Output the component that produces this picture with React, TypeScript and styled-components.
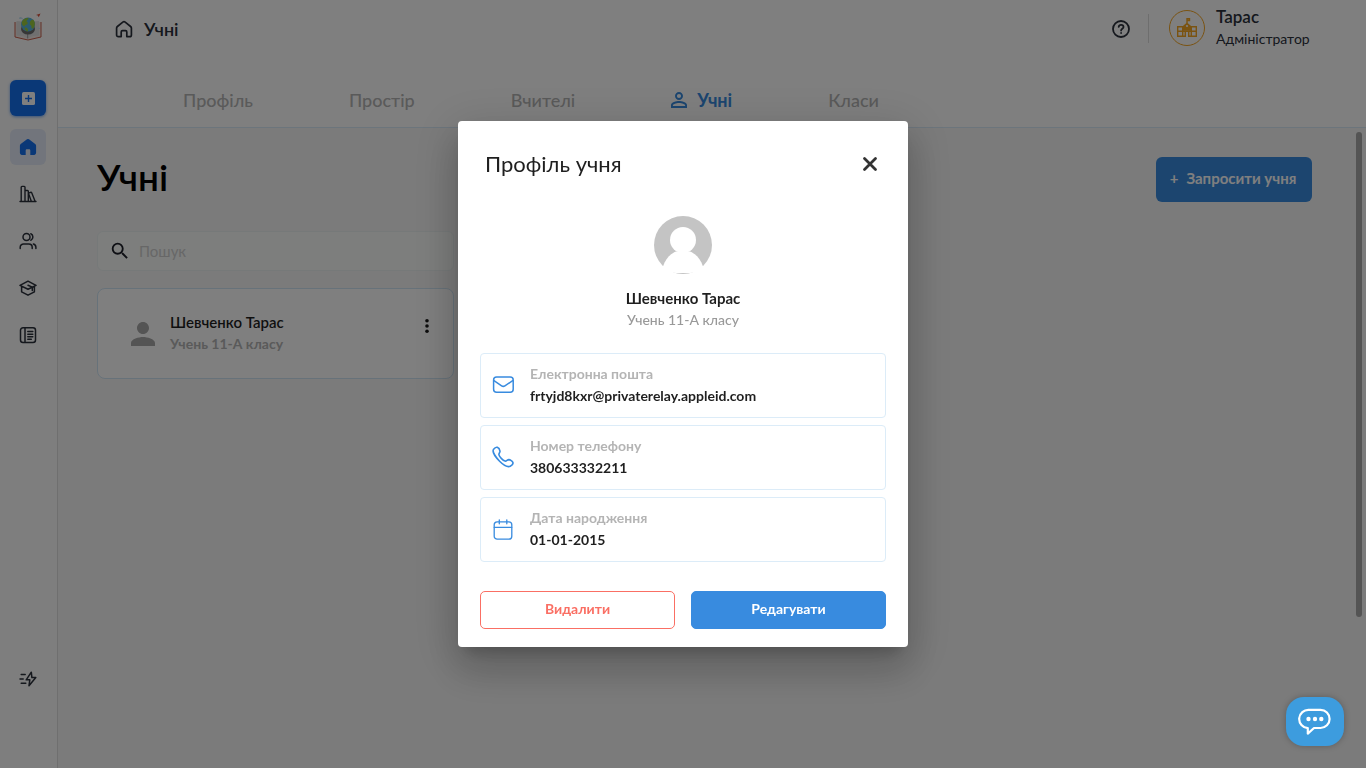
import React from "react";
import styled, { createGlobalStyle, css } from "styled-components";

const GlobalStyle = createGlobalStyle`
  * { box-sizing: border-box; }
  html, body, #root { height: 100%; margin: 0; }
  body {
    font-family: Lato, "Noto Sans", sans-serif;
    font-size: 15px;
    line-height: 22px;
    color: #1f1f1f;
    overflow: hidden;
  }
  button, input { font: inherit; color: inherit; }
  button { cursor: pointer; padding: 0; border: 0; background: none; }
  a { color: inherit; text-decoration: none; }
  h1, h2, p, dl, dt, dd { margin: 0; }
  svg { display: block; flex: none; }
`;

const Shell = styled.div`
  display: flex;
  min-height: 100%;
  background: #f7f7f7;
`;

const Sidebar = styled.nav`
  display: flex;
  flex-direction: column;
  align-items: center;
  gap: 11px;
  width: 58px;
  flex: none;
  padding: 12px 1px 71px 0;
  background: #fcfcfc;
  border-right: 1px solid #dedede;
`;

const LogoLink = styled.a`
  margin-bottom: 28px;
`;

const railItem = css`
  display: flex;
  align-items: center;
  justify-content: center;
  width: 36px;
  height: 36px;
  border-radius: 6px;
`;

const AddButton = styled.button`
  ${railItem}
  margin-bottom: 2px;
  background: #1570ef;
  color: #fff;
  box-shadow: 0 1px 3px rgba(21, 112, 239, 0.6);
`;

const RailLink = styled.a<{ $active?: boolean; $last?: boolean }>`
  ${railItem}
  color: ${(p) => (p.$active ? "#1570ef" : "#2b303b")};
  background: ${(p) => (p.$active ? "#e4ebf8" : "none")};
  margin-top: ${(p) => (p.$last ? "auto" : "0")};
`;

const Column = styled.div`
  display: flex;
  flex-direction: column;
  flex: 1;
  min-width: 0;
`;

const Header = styled.header`
  background: #fff;
  border-bottom: 1px solid #d9ebf8;
`;

const TopBar = styled.div`
  display: flex;
  align-items: flex-start;
  justify-content: space-between;
  height: 75px;
  padding: 7px 54px 0 57px;
`;

const Crumb = styled.a`
  display: flex;
  align-items: center;
  gap: 11px;
  height: 43px;
  font-size: 18px;
  font-weight: 600;
  color: #2b303b;
`;

const Account = styled.div`
  display: flex;
  align-items: center;
  height: 42px;
  color: #2b303b;
`;

const HelpButton = styled.button`
  padding-right: 17px;
  margin-right: 20px;
  height: 29px;
  border-right: 1px solid #dcdcdc;
`;

const SchoolBadge = styled.div`
  display: flex;
  align-items: center;
  justify-content: center;
  width: 36px;
  height: 36px;
  margin-right: 11px;
  border: 1px solid #f5a623;
  border-radius: 50%;
  color: #f5a623;
`;

const AccountText = styled.div`
  min-width: 96px;
`;

const AccountName = styled.p`
  font-size: 17px;
  font-weight: 600;
`;

const AccountRole = styled.p`
  font-size: 14px;
`;

const Tabs = styled.nav`
  display: flex;
  align-items: center;
  gap: 96px;
  height: 52px;
  padding: 0 0 3px 125px;
  font-size: 18px;
`;

const Tab = styled.a<{ $active?: boolean }>`
  display: flex;
  align-items: center;
  gap: 10px;
  color: ${(p) => (p.$active ? "#388bdf" : "#b4b4b4")};
  font-weight: ${(p) => (p.$active ? 700 : 500)};
`;

const Main = styled.main`
  padding: 29px 54px 0 39px;
`;

const TitleRow = styled.div`
  display: flex;
  align-items: center;
  justify-content: space-between;
  margin-bottom: 29px;
`;

const PageTitle = styled.h1`
  padding-bottom: 5px;
  font-size: 37px;
  line-height: 40px;
  font-weight: 600;
  color: #000;
`;

const InviteButton = styled.button`
  display: flex;
  align-items: center;
  justify-content: center;
  gap: 8px;
  width: 156px;
  height: 45px;
  padding: 0 2px 3px 0;
  border-radius: 6px;
  background: #388bdf;
  color: #fff;
  font-weight: 700;
`;

const List = styled.section`
  display: flex;
  flex-direction: column;
  gap: 17px;
  width: 357px;
`;

const SearchBox = styled.label`
  display: flex;
  align-items: center;
  gap: 8px;
  height: 40px;
  padding: 0 11px;
  border: 1px solid #edf3f3;
  border-radius: 6px;
  background: #fafdfb;
  color: #1d1f28;
`;

const SearchInput = styled.input`
  flex: 1;
  min-width: 0;
  padding: 0;
  border: 0;
  outline: 0;
  background: none;
  &::placeholder { color: #cfcfcf; opacity: 1; }
`;

const StudentCard = styled.article`
  display: flex;
  align-items: flex-start;
  height: 91px;
  padding: 22px 14px 0 27px;
  border: 1px solid #cfe5f5;
  border-radius: 8px;
  background: #fff;
`;

const CardAvatar = styled.div`
  margin: 5px 9px 0 0;
  color: #a8a8a8;
`;

const CardText = styled.div`
  flex: 1;
  font-weight: 600;
`;

const CardNote = styled.p`
  font-size: 14px;
  font-weight: 700;
  color: #b4b4b4;
`;

const MenuButton = styled.button`
  margin-top: 3px;
  color: #1a1a1a;
`;

const ScrollThumb = styled.div`
  position: fixed;
  top: 132px;
  right: 4px;
  width: 6px;
  height: 485px;
  border-radius: 3px;
  background: #a8a8a8;
`;

const Backdrop = styled.div`
  position: fixed;
  inset: 0;
  display: flex;
  align-items: center;
  justify-content: center;
  background: rgba(0, 0, 0, 0.5);
`;

const Dialog = styled.div`
  width: 450px;
  padding: 27px 22px 18px;
  border-radius: 4px;
  background: #fff;
  box-shadow:
    0 11px 15px -7px rgba(0, 0, 0, 0.2),
    0 24px 38px 3px rgba(0, 0, 0, 0.14),
    0 9px 46px 8px rgba(0, 0, 0, 0.12);
`;

const DialogHead = styled.div`
  display: flex;
  align-items: center;
  justify-content: space-between;
  padding: 0 8px 0 5px;
  margin-bottom: 36px;
`;

const DialogTitle = styled.h2`
  font-size: 22px;
  line-height: 32px;
  font-weight: 400;
`;

const Person = styled.div`
  display: flex;
  flex-direction: column;
  align-items: center;
  margin-bottom: 22px;
`;

const PersonName = styled.p`
  margin-top: 13px;
  font-weight: 700;
`;

const PersonNote = styled.p`
  font-size: 14px;
  font-weight: 500;
  color: #999;
`;

const Fields = styled.dl`
  display: flex;
  flex-direction: column;
  gap: 7px;
  margin-bottom: 29px;
`;

const Field = styled.div`
  display: grid;
  grid-template-columns: 22px 1fr;
  grid-template-rows: 22px 22px;
  column-gap: 16px;
  height: 65px;
  padding: 9px 11px 0;
  border: 1px solid #dcecf8;
  border-radius: 4px;
  & > svg {
    grid-row: 1 / 3;
    align-self: center;
    color: #388bdf;
  }
`;

const FieldLabel = styled.dt`
  font-size: 14px;
  color: #b4b4b4;
  font-weight: 700;
`;

const FieldValue = styled.dd`
  font-size: 14px;
  font-weight: 700;
`;

const Actions = styled.div`
  display: grid;
  grid-template-columns: 1fr 1fr;
  gap: 16px;
`;

const ActionButton = styled.button<{ $danger?: boolean }>`
  height: 38px;
  padding-bottom: 2px;
  border-radius: 5px;
  border: 1px solid ${(p) => (p.$danger ? "#fa6f64" : "#388bdf")};
  background: ${(p) => (p.$danger ? "#fff" : "#388bdf")};
  color: ${(p) => (p.$danger ? "#fa6f64" : "#fff")};
  font-size: 14px;
  font-weight: 700;
`;

const ChatButton = styled.button`
  position: fixed;
  right: 22px;
  bottom: 22px;
  display: flex;
  align-items: center;
  justify-content: center;
  width: 58px;
  height: 49px;
  border-radius: 18px;
  background: #3d9cde;
  color: #fff;
  box-shadow: 0 0 6px rgba(0, 0, 0, 0.25);
`;

type StrokeProps = { size?: number; box?: number; width?: number; children: React.ReactNode };

const Stroke = ({ size = 18, box = 18, width = 1.5, children }: StrokeProps) => (
  <svg width={size} height={size} viewBox={`0 0 ${box} ${box}`} fill="none" stroke="currentColor"
    strokeWidth={width} strokeLinecap="round" strokeLinejoin="round" aria-hidden="true">
    {children}
  </svg>
);

const Logo = () => (
  <svg width="28" height="29" viewBox="0 0 28 29" aria-hidden="true">
    <path d="M1 10v15l13 3 13-3V10" fill="#f4e9e4" stroke="#c9604c" strokeWidth="1" />
    <path d="M2.500 9c4 .2 8 1.200 11.200 4 3.200-2.800 7.300-3.800 11.300-4v14.500c-4 0-8 .6-11.300 3-3.200-2.400-7.200-3-11.200-3z" fill="#e0e0e0" />
    <path d="M13.700 13v13.500" stroke="#9a9a9a" />
    <ellipse cx="14" cy="17" rx="7" ry="5.500" fill="#6f6f6f" />
    <circle cx="14" cy="12.500" r="7" fill="#58b5dc" />
    <path d="M8 9.500c2-3 5-3.800 6.500-3.200-.3 1.600-1.800 1.800-2 3.200 1.500.4 1.500 2 .5 3-1.800.2-2 1.500-3 1.800-1.700-1-2.700-2.800-2-4.800zM16 10c1-2 3-3 4-1.500 1.200 2.500 1.200 5-.5 7.500-1.500 1.500-2.500 0-2-2-1.500-.8-2.200-2.500-1.500-4zM10.500 15.500c2-.5 4 .8 3.500 3.800-2.100 0-3.500-1.500-3.500-3.800z" fill="#9acb3c" />
    <path d="M22 3l4.500-1.500-1.700 3.700-1-1.700z" fill="#d9503a" />
    <path d="M5 6.500c0-1.500 2-2 3-.8 1 .2 1 1 .5 1.300H5.500z" fill="#c5e2f2" />
    <path d="M24 16c1-.6 2-.2 2 1h-2z" fill="#c5e2f2" />
  </svg>
);

const PlusSquare = () => (
  <svg width="13" height="13" viewBox="0 0 12 12" aria-hidden="true">
    <rect width="12" height="12" rx="1.500" fill="currentColor" />
    <path d="M6 2.800v6.400M2.800 6h6.400" stroke="#1570ef" strokeWidth="1.300" />
  </svg>
);

const HomeSolid = () => (
  <svg width="18" height="18" viewBox="0 0 18 18" fill="currentColor" aria-hidden="true">
    <path d="M8 1.300a1.700 1.700 0 0 1 2 0l6.200 4.700c.6.400.9 1 .9 1.700v7.100c0 1.200-.9 2.200-2 2.200h-3.800v-4.500c0-.7-.5-1.200-1.200-1.200H7.900c-.7 0-1.200.5-1.200 1.200V17H2.900c-1.200 0-2-1-2-2.200V7.700c0-.7.300-1.300.8-1.700z" />
  </svg>
);

const HomeOutline = () => (
  <Stroke width={1.7}>
    <path d="M6.200 16.600H3.300c-1 0-1.700-.8-1.700-1.700V8.100c0-.6.300-1.200.8-1.600l5.400-4.400a1.900 1.900 0 0 1 2.400 0l5.400 4.400c.5.400.8 1 .8 1.600v6.800c0 1-.8 1.700-1.700 1.700h-2.900v-4.700c0-.7-.5-1.200-1.200-1.200H7.400c-.7 0-1.200.5-1.200 1.200z" />
  </Stroke>
);

const Books = () => (
  <Stroke width={1.4}>
    <path d="M1 16.500h16M2.200 16.300V2.200c0-.5.300-.8.800-.8h2.200c.5 0 .8.300.8.800v14.100M6.200 5.500h2.300c.5 0 .8.300.8.800v10M9.500 8.200l2.200-.9c.4-.1.800 0 1 .4l3.400 8.600M9.500 8.500l2.800 7.800" />
  </Stroke>
);

const Users = () => (
  <Stroke width={1.5}>
    <circle cx="7.500" cy="5" r="3.500" />
    <path d="M1.200 16.500v-1.200c0-2 1.600-3.400 3.400-3.400h5.200c2 0 3.400 1.500 3.400 3.400v1.200M11.800 1.800a3.500 3.500 0 0 1 0 6.400M14.400 12c1.500.4 2.500 1.700 2.500 3.300v1.200" />
  </Stroke>
);

const Graduation = () => (
  <Stroke width={1.5}>
    <path d="M1 6.400L9 2.200l8 4.200-8 3.800zM2.600 7.300v5.500L9 16.200l6.400-3.400V7.300M9 6.200l4.300 1.900v3.500" />
  </Stroke>
);

const Journal = () => (
  <Stroke width={1.5}>
    <rect x="1.500" y="1.800" width="15" height="14.600" rx="2.500" />
    <path d="M6 2v14.200M8.800 5.500h5M8.800 8.200h5M8.800 10.800h5M8.800 13.200h3.500" />
  </Stroke>
);

const FastBolt = () => (
  <Stroke width={1.500}>
    <path d="M12.300 2.200L7.200 9.800h3.600l-.8 6 6.800-8.200h-3.900zM2.200 4.500h4M1 9h3.200M2.200 13.200h4.600" />
  </Stroke>
);

const Help = () => (
  <svg width="20" height="29" viewBox="0 0 20 29" fill="none" stroke="currentColor" strokeWidth="1.800" strokeLinecap="round" strokeLinejoin="round" aria-hidden="true">
    <circle cx="10" cy="15" r="8" />
    <path d="M7.700 12.800c.2-1.300 1.200-2 2.400-2s2.400.8 2.400 2.100c0 1.700-2.400 1.900-2.400 3.600M10.100 19v.1" />
  </svg>
);

const School = () => (
  <svg width="20" height="20" viewBox="0 0 20 20" fill="none" stroke="currentColor" strokeWidth="1.400" aria-hidden="true">
    <path d="M.7 8.700h5V18.300h-5zM14.300 8.700h5v9.600h-5zM.7 13.300h5M14.300 13.300h5M5.700 13.300h2.600M11.700 13.300h2.600M5.700 18.300h2.600v-5h3.400v5h2.600M10 5V.8h2.500v1.700H10" />
    <path d="M5 8.700L10 4.500l5 4.200v4H5z" fill="currentColor" stroke="none" />
    <circle cx="10" cy="8" r="1.100" fill="#fff" stroke="none" />
  </svg>
);

const TabPerson = () => (
  <svg width="16" height="16" viewBox="4 4 16 16" fill="currentColor" aria-hidden="true">
    <path d="M12 5.900a2.100 2.100 0 1 1 0 4.200 2.100 2.100 0 0 1 0-4.200m0 9c2.970 0 6.100 1.460 6.100 2.100v1.100H5.900V17c0-.64 3.130-2.100 6.100-2.100M12 4C9.790 4 8 5.790 8 8s1.790 4 4 4 4-1.790 4-4-1.790-4-4-4m0 9c-2.670 0-8 1.340-8 4v3h16v-3c0-2.660-5.330-4-8-4" />
  </svg>
);

const SearchIcon = () => (
  <svg width="22" height="22" viewBox="0 0 24 24" fill="currentColor" aria-hidden="true">
    <path d="M15.500 14h-.79l-.28-.27A6.470 6.470 0 0 0 16 9.500 6.500 6.500 0 1 0 9.500 16c1.610 0 3.090-.59 4.230-1.570l.27.28v.79l5 4.990L20.490 19zm-6 0C7.010 14 5 11.990 5 9.500S7.010 5 9.500 5 14 7.010 14 9.500 11.990 14 9.500 14" />
  </svg>
);

const PersonSolid = () => (
  <svg width="36" height="36" viewBox="0 0 24 24" fill="currentColor" aria-hidden="true">
    <path d="M12 12c2.210 0 4-1.790 4-4s-1.790-4-4-4-4 1.790-4 4 1.790 4 4 4m0 2c-2.670 0-8 1.340-8 4v2h16v-2c0-2.660-5.330-4-8-4" />
  </svg>
);

const Dots = () => (
  <svg width="24" height="24" viewBox="0 0 24 24" fill="currentColor" aria-hidden="true">
    <circle cx="12" cy="6.700" r="1.800" /><circle cx="12" cy="12" r="1.800" /><circle cx="12" cy="17.300" r="1.800" />
  </svg>
);

const Avatar = () => (
  <svg width="58" height="58" viewBox="0 0 58 58" aria-hidden="true">
    <circle cx="29" cy="29" r="29" fill="#c4c4c4" />
    <circle cx="29" cy="24" r="13" fill="#fff" />
    <path d="M22 35.500C16 38 11.500 43 9 50.500 14 55 21 57 29 57s15-2 20-6.500C46.500 43 42 38 36 35.500z" fill="#fff" />
    <path d="M9 50l-2.500 4L22 57h14l15-3-2-4z" fill="#fff" />
  </svg>
);

const Mail = () => (
  <Stroke size={22} box={22} width={1.5}>
    <rect x="1.600" y="3" width="19.600" height="15.200" rx="3" />
    <path d="M2 6.700l7.600 5.100c1 .7 2.300.7 3.300 0l7.800-5.100" />
  </Stroke>
);

const Phone = () => (
  <Stroke size={22} box={22} width={1.6}>
    <path d="M1.400 3.500C2.500 2 4 .9 5.300 1.300c1.300.5 2.500 2.600 2.700 3.800.2 1.500-1.300 2.200-1.100 3.600.3 1.900 3.900 5.700 6.200 6.400 1.400.3 2.200-1.500 3.700-1.500 1.400.1 3.700 1.600 4.100 2.800.4 1.300-1.200 3.100-2.600 3.800-2.300 1.100-6.900-1.200-10.700-5C3.600 11.200.2 5.800 1.400 3.500z" />
  </Stroke>
);

const Calendar = () => (
  <Stroke size={22} box={22} width={1.3}>
    <rect x="2.200" y="3.800" width="17.600" height="17.400" rx="3" />
    <path d="M2.300 9.400h17.400M7.300 1.800v4M14.800 1.800v4" />
  </Stroke>
);

const ChatBubble = () => (
  <svg width="34" height="30" viewBox="0 0 34 30" fill="none" stroke="currentColor" strokeWidth="2.200" strokeLinejoin="round" aria-hidden="true">
    <path d="M11 2.800h11.500a9 9 0 0 1 0 18.200h-6.500L9.800 26.600V21.200A9.200 9.200 0 0 1 11 2.800z" />
    <g fill="currentColor" stroke="none">
      <circle cx="10.500" cy="12" r="2.200" /><circle cx="17" cy="12" r="2.200" /><circle cx="23.300" cy="12" r="2.200" />
    </g>
  </svg>
);

const railLinks = [
  { name: "Головна", icon: <HomeSolid />, active: true },
  { name: "Бібліотека", icon: <Books /> },
  { name: "Користувачі", icon: <Users /> },
  { name: "Навчання", icon: <Graduation /> },
  { name: "Журнал", icon: <Journal /> },
];

const tabs = ["Профіль", "Простір", "Вчителі", "Учні", "Класи"];

const fields = [
  { label: "Електронна пошта", value: "frtyjd8kxr@privaterelay.appleid.com", icon: <Mail /> },
  { label: "Номер телефону", value: "380633332211", icon: <Phone /> },
  { label: "Дата народження", value: "01-01-2015", icon: <Calendar /> },
];

export default function App() {
  return (
    <>
      <GlobalStyle />
      <Shell>
        <Sidebar>
          <LogoLink href="#" aria-label="Школа"><Logo /></LogoLink>
          <AddButton type="button" aria-label="Додати"><PlusSquare /></AddButton>
          {railLinks.map((l) => (
            <RailLink key={l.name} href="#" aria-label={l.name} $active={l.active}>{l.icon}</RailLink>
          ))}
          <RailLink href="#" aria-label="Швидкі дії" $last><FastBolt /></RailLink>
        </Sidebar>
        <Column>
          <Header>
            <TopBar>
              <Crumb href="#"><HomeOutline />Учні</Crumb>
              <Account>
                <HelpButton type="button" aria-label="Допомога"><Help /></HelpButton>
                <SchoolBadge><School /></SchoolBadge>
                <AccountText>
                  <AccountName>Тарас</AccountName>
                  <AccountRole>Адміністратор</AccountRole>
                </AccountText>
              </Account>
            </TopBar>
            <Tabs>
              {tabs.map((t) => (
                <Tab key={t} href="#" $active={t === "Учні"}>
                  {t === "Учні" && <TabPerson />}
                  {t}
                </Tab>
              ))}
            </Tabs>
          </Header>
          <Main>
            <TitleRow>
              <PageTitle>Учні</PageTitle>
              <InviteButton type="button"><span>+</span>Запросити учня</InviteButton>
            </TitleRow>
            <List>
              <SearchBox>
                <SearchIcon />
                <SearchInput type="search" placeholder="Пошук" aria-label="Пошук" />
              </SearchBox>
              <StudentCard>
                <CardAvatar><PersonSolid /></CardAvatar>
                <CardText>
                  <p>Шевченко Тарас</p>
                  <CardNote>Учень 11-А класу</CardNote>
                </CardText>
                <MenuButton type="button" aria-label="Меню"><Dots /></MenuButton>
              </StudentCard>
            </List>
          </Main>
        </Column>
      </Shell>
      <ScrollThumb />
      <Backdrop>
        <Dialog role="dialog" aria-modal="true" aria-labelledby="profile-title">
          <DialogHead>
            <DialogTitle id="profile-title">Профіль учня</DialogTitle>
            <button type="button" aria-label="Закрити">
              <Stroke size={16} box={16} width={2.8}><path d="M2.500 2.500l11 11M13.500 2.500l-11 11" stroke="#333" /></Stroke>
            </button>
          </DialogHead>
          <Person>
            <Avatar />
            <PersonName>Шевченко Тарас</PersonName>
            <PersonNote>Учень 11-А класу</PersonNote>
          </Person>
          <Fields>
            {fields.map((f) => (
              <Field key={f.label}>
                {f.icon}
                <FieldLabel>{f.label}</FieldLabel>
                <FieldValue>{f.value}</FieldValue>
              </Field>
            ))}
          </Fields>
          <Actions>
            <ActionButton type="button" $danger>Видалити</ActionButton>
            <ActionButton type="button">Редагувати</ActionButton>
          </Actions>
        </Dialog>
      </Backdrop>
      <ChatButton type="button" aria-label="Чат"><ChatBubble /></ChatButton>
    </>
  );
}
